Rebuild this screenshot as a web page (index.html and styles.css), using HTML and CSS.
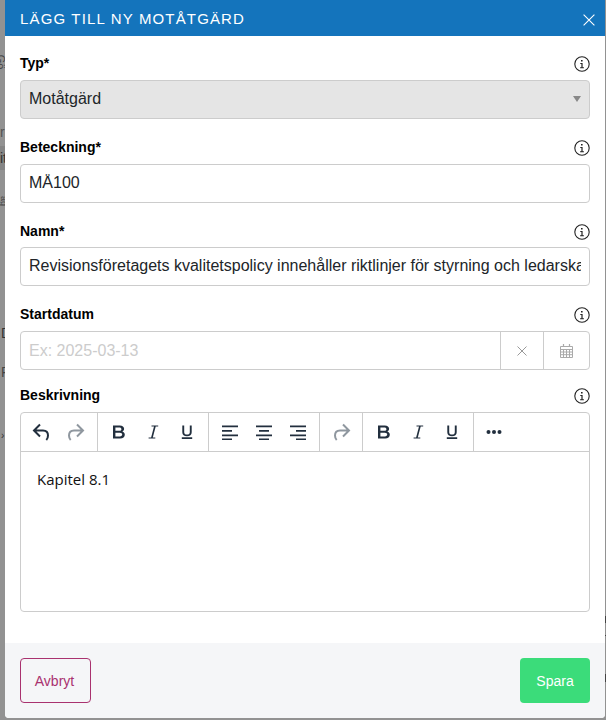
FILE: index.html
```html
<!DOCTYPE html>
<html lang="sv">
<head>
<meta charset="utf-8">
<title>Lägg till ny motåtgärd</title>
<link rel="stylesheet" href="styles.css">
</head>
<body>
<div class="backdrop" aria-hidden="true">
  <span class="frag frag-a">Gö</span>
  <span class="frag frag-b">r</span>
  <span class="frag frag-c">it</span>
  <span class="frag frag-d">äg</span>
  <span class="frag frag-e">D</span>
  <span class="frag frag-f">P</span>
  <span class="frag frag-g">›</span>
  <span class="mark mark-a"></span>
  <span class="mark mark-b"></span>
  <span class="mark mark-c"></span>
</div>
<main class="modal">
  <header class="modal-head">
    <h1 class="modal-title">Lägg till ny motåtgärd</h1>
    <button class="close" type="button" aria-label="Stäng">
      <svg viewBox="0 0 12 12" width="12" height="12"><path d="M.6.6l10.8 10.8M11.4.6L.6 11.4" fill="none" stroke="#fff" stroke-width="1.1"/></svg>
    </button>
  </header>
  <form class="modal-body">
    <div class="field field-type">
      <div class="label-row"><label class="label">Typ*</label><svg class="info" viewBox="0 0 16 16"><use href="#i-info"/></svg></div>
      <div class="control select"><span>Motåtgärd</span><i class="caret"></i></div>
    </div>
    <div class="field field-code">
      <div class="label-row"><label class="label">Beteckning*</label><svg class="info" viewBox="0 0 16 16"><use href="#i-info"/></svg></div>
      <input class="control input" value="MÅ100">
    </div>
    <div class="field field-name">
      <div class="label-row"><label class="label">Namn*</label><svg class="info" viewBox="0 0 16 16"><use href="#i-info"/></svg></div>
      <input class="control input" value="Revisionsföretagets kvalitetspolicy innehåller riktlinjer för styrning och ledarskap">
    </div>
    <div class="field field-date">
      <div class="label-row"><label class="label">Startdatum</label><svg class="info" viewBox="0 0 16 16"><use href="#i-info"/></svg></div>
      <div class="control date">
        <input class="date-input" placeholder="Ex: 2025-03-13">
        <span class="date-btn date-clear"><svg viewBox="0 0 10 10" width="10" height="10"><path d="M.5.5l9 9M9.500.5l-9 9" fill="none" stroke="#999" stroke-width="1"/></svg></span>
        <span class="date-btn date-cal"><svg viewBox="0 0 13 14" width="13" height="14"><path d="M.5 2.500h12v11H.5zM.5 5.500h12M.5 8h12M.5 10.700h12M3.500 5.500v8M6.500 5.500v8M9.500 5.500v8" fill="none" stroke="#aaa" stroke-width="1"/><path d="M3.500 0v3M9.500 0v3" stroke="#aaa" stroke-width="1.200"/></svg></span>
      </div>
    </div>
    <div class="field field-desc">
      <div class="label-row"><label class="label">Beskrivning</label><svg class="info" viewBox="0 0 16 16"><use href="#i-info"/></svg></div>
      <div class="editor">
        <div class="toolbar">
          <div class="group g-history">
            <span class="tool tool-wide"><svg viewBox="0 0 18 18"><use href="#i-undo"/></svg></span>
            <span class="tool tool-wide off"><svg viewBox="0 0 18 18"><use href="#i-redo"/></svg></span>
          </div>
          <div class="group g-format">
            <span class="tool"><svg viewBox="0 0 16 16"><use href="#i-bold"/></svg></span>
            <span class="tool"><svg viewBox="0 0 16 16"><use href="#i-italic"/></svg></span>
            <span class="tool"><svg viewBox="0 0 16 16"><use href="#i-under"/></svg></span>
          </div>
          <div class="group g-format">
            <span class="tool"><svg viewBox="0 0 16 16"><use href="#i-left"/></svg></span>
            <span class="tool"><svg viewBox="0 0 16 16"><use href="#i-center"/></svg></span>
            <span class="tool"><svg viewBox="0 0 16 16"><use href="#i-right"/></svg></span>
          </div>
          <div class="group g-redo">
            <span class="tool tool-wide off"><svg viewBox="0 0 18 18"><use href="#i-redo"/></svg></span>
          </div>
          <div class="group g-format">
            <span class="tool"><svg viewBox="0 0 16 16"><use href="#i-bold"/></svg></span>
            <span class="tool"><svg viewBox="0 0 16 16"><use href="#i-italic"/></svg></span>
            <span class="tool"><svg viewBox="0 0 16 16"><use href="#i-under"/></svg></span>
          </div>
          <div class="group g-more">
            <span class="tool"><svg viewBox="0 0 16 16"><use href="#i-more"/></svg></span>
          </div>
        </div>
        <div class="editor-area"><p class="editor-text">Kapitel 8.1</p></div>
      </div>
    </div>
  </form>
  <footer class="modal-foot">
    <button class="btn btn-cancel" type="button">Avbryt</button>
    <button class="btn btn-save" type="button">Spara</button>
  </footer>
</main>
<svg class="defs" aria-hidden="true">
  <defs>
    <g id="i-info"><circle cx="8" cy="8" r="7.200" fill="none" stroke="#222" stroke-width="1.100"/><path d="M7 3.900h1.600v1.500H7zM6.300 7h2.300v4.300h1.300v1H6.100v-1h1.300V8H6.300z" fill="#222"/></g>
    <path id="i-undo" d="M8 1.500L2 7.500l6 6M2.500 7.500H11c3 0 5 2 5 5 0 2-.7 3.500-1.700 4.500" fill="none" stroke="currentColor" stroke-width="2"/>
    <path id="i-redo" d="M10 1.500l6 6-6 6M15.500 7.500H7c-3 0-5 2-5 5 0 2 .7 3.500 1.700 4.500" fill="none" stroke="currentColor" stroke-width="2"/>
    <path id="i-bold" d="M2 1.500h6.800c2.700 0 4.300 1.300 4.300 3.300 0 1.300-.7 2.300-1.800 2.800 1.500.5 2.500 1.600 2.500 3.100 0 2.300-1.800 3.800-4.600 3.800H2zm2.400 2.100v3.200h4c1.100 0 2-.6 2-1.600s-.9-1.600-2-1.600zm0 5.200v3.600h4.500c1.400 0 2.300-.7 2.300-1.800s-.9-1.800-2.300-1.800z" fill="currentColor"/>
    <path id="i-italic" d="M6.500 1.500h6.700v1.100h-2.500L7.800 13.400h2.500v1.100H3.600v-1.100h2.500L9 2.600H6.500z" fill="currentColor"/>
    <path id="i-under" d="M3.300 1.500v6.700c0 2.700 1.800 4 4.700 4s4.700-1.300 4.700-4V1.500h-1.900v6.700c0 1.600-1 2.300-2.800 2.300s-2.800-.7-2.800-2.300V1.500zM2.800 13.300h10.400V15H2.800z" fill="currentColor"/>
    <path id="i-left" d="M0 1.500h16v1.800H0zM0 6h10v1.800H0zM0 10.500h16v1.800H0zM0 14.500h10v1.800H0z" fill="currentColor"/>
    <path id="i-center" d="M0 1.500h16v1.800H0zM3 6h10v1.800H3zM0 10.500h16v1.800H0zM3 14.500h10v1.800H3z" fill="currentColor"/>
    <path id="i-right" d="M0 1.500h16v1.800H0zM6 6h10v1.800H6zM0 10.500h16v1.800H0zM6 14.500h10v1.800H6z" fill="currentColor"/>
    <g id="i-more" fill="currentColor"><circle cx="2.500" cy="8" r="2"/><circle cx="8" cy="8" r="2"/><circle cx="13.500" cy="8" r="2"/></g>
  </defs>
</svg>
</body>
</html>
```
FILE: styles.css
```css
* { box-sizing: border-box; }
html, body { margin: 0; height: 100%; }
body {
  background: #929292;
  font-family: "Liberation Sans", Arial, sans-serif;
  overflow: hidden;
}
.backdrop { position: absolute; inset: 0; overflow: hidden; }
.frag { position: absolute; font-size: 14px; line-height: 16px; color: #444; }
.frag-a { left: -6px; top: 54px; transform: rotate(90deg); font-size: 11px; }
.frag-b { left: 0; top: 124px; color: #555; }
.frag-c { left: 0; top: 146px; padding: 4px 2px 4px 0; background: #858585; height: 24px; color: #333; }
.frag-d { left: -1px; top: 193px; transform: rotate(90deg); font-size: 9px; }
.frag-e { left: 1px; top: 325px; color: #333; }
.frag-f { left: 1px; top: 364px; color: #444; }
.frag-g { left: 1px; top: 428px; font-size: 10px; color: #333; }
.mark { position: absolute; right: 0; width: 1px; background: #444; }
.mark-a { top: 616px; height: 7px; }
.mark-b { top: 635px; height: 1px; }
.mark-c { top: 674px; height: 8px; }

.modal {
  position: absolute;
  left: 5px;
  top: 0;
  width: 600px;
  height: 718px;
  background: #fff;
  display: flex;
  flex-direction: column;
  border-radius: 0 0 4px 4px;
  overflow: hidden;
}
.modal-head {
  height: 36px;
  flex: none;
  background: #1474bc;
  display: flex;
  align-items: center;
  justify-content: space-between;
  padding: 0 10px 0 15px;
}
.modal-title {
  margin: 0;
  font-size: 15px;
  font-weight: 400;
  line-height: 35px;
  letter-spacing: 1.15px;
  text-transform: uppercase;
  color: #fff;
}
.close {
  border: 0;
  background: none;
  padding: 0;
  width: 12px;
  height: 12px;
  margin-top: 4px;
  display: flex;
}
.modal-body { flex: 1; padding: 0 15px; display: flex; flex-direction: column; }
.field { display: flex; flex-direction: column; }
.field-type { padding-top: 18px; }
.field-code { padding-top: 19px; }
.field-name { padding-top: 19px; }
.field-date { padding-top: 19px; }
.field-desc { padding-top: 16px; }
.label-row {
  height: 26px;
  display: flex;
  align-items: flex-start;
  justify-content: space-between;
}
.field-name .label-row { height: 25px; }
.label {
  font-size: 14px;
  font-weight: 700;
  line-height: 18px;
  color: #000;
}
.info { width: 16px; height: 16px; margin: 2px 0 0; }
.control {
  height: 39px;
  width: 100%;
  border: 1px solid #ccc;
  border-radius: 4px;
  font-family: inherit;
  font-size: 16px;
  color: #212529;
  background: #fff;
}
.input { padding: 0 8px 2px; outline: none; }
.select {
  background: #e5e5e5;
  display: flex;
  align-items: center;
  justify-content: space-between;
  padding: 0 8px 1px;
}
.caret {
  width: 0;
  height: 0;
  border-left: 4px solid transparent;
  border-right: 4px solid transparent;
  border-top: 6px solid #888;
}
.date { display: flex; }
.date-input {
  flex: 1;
  min-width: 0;
  border: 0;
  padding: 0 8px;
  background: none;
  outline: none;
  font: inherit;
  border-radius: 4px;
}
.date-input::placeholder { color: #ccc; opacity: 1; }
.date-btn {
  flex: none;
  width: 43px;
  border-left: 1px solid #ccc;
  display: flex;
  align-items: center;
  justify-content: center;
}
.date-cal { width: 46px; }
.editor { height: 200px; border: 1px solid #ccc; border-radius: 4px; display: flex; flex-direction: column; }
.toolbar { height: 39px; flex: none; display: flex; border-bottom: 1px solid #ccc; }
.group { display: flex; align-items: center; border-right: 1px solid #ccc; }
.g-history { width: 77px; padding-left: 11px; gap: 17px; }
.g-format { width: 111px; padding-left: 13px; gap: 18px; }
.g-redo { width: 43px; padding-left: 13px; }
.g-more { border-right: 0; padding-left: 12px; }
.tool { display: flex; color: #222f3e; }
.tool.off { color: #8f979f; }
.tool svg { width: 16px; height: 16px; display: block; }
.tool-wide svg { width: 18px; height: 18px; }
.editor-area { flex: 1; padding: 17px 16px; }
.editor-text { margin: 0; font-family: "Open Sans", "Noto Sans", sans-serif; font-size: 15px; line-height: 21px; color: #111; }
.modal-foot {
  height: 75px;
  flex: none;
  background: #f5f6f8;
  display: flex;
  align-items: flex-start;
  justify-content: space-between;
  padding: 15px 15px 0;
}
.btn {
  height: 45px;
  border-radius: 4px;
  font-family: inherit;
  font-size: 14px;
  padding: 0;
}
.btn-cancel { width: 71px; background: none; border: 1px solid #a9326f; color: #a9326f; padding-right: 2px; }
.btn-save { width: 70px; background: #3bdc7a; border: 0; color: #fff; }
.defs { position: absolute; width: 0; height: 0; }
```
